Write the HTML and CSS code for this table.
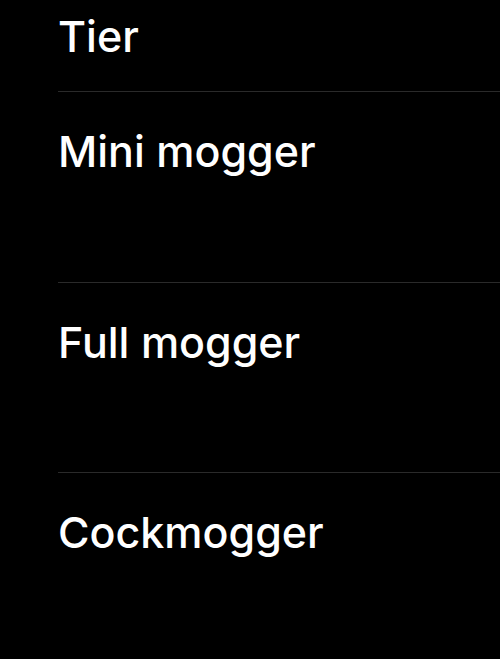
FILE: index.html
```html
<!DOCTYPE html>
<html lang="en">
<head>
    <meta charset="UTF-8">
    <meta name="viewport" content="width=device-width, initial-scale=1.0">
    <title>Tier</title>
    <link rel="stylesheet" href="styles.css">
</head>
<body>
    <div class="table">
        <div class="table-head">Tier</div>
        <div class="table-row">Mini mogger</div>
        <div class="table-row">Full mogger</div>
        <div class="table-row">Cockmogger</div>
    </div>
</body>
</html>
```

FILE: styles.css
```css
body {
    margin: 0;
    padding: 0;
    background-color: #000;
    color: #fff;
    font-family: Inter, "Noto Sans", sans-serif;
    font-weight: 500;
}
.table {
    padding-left: 58px;
}
.table-head {
    font-size: 43px;
    line-height: 50px;
    padding: 11px 0 30px 0;
}
.table-row {
    font-size: 43px;
    line-height: 50px;
    padding: 34px 0 105.5px 0;
    border-top: 1px solid #2a2a2a;
}
```
